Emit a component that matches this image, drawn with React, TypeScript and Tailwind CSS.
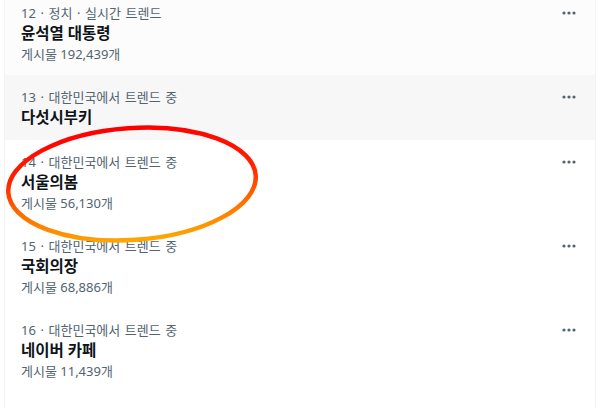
import React from "react";

type Trend = { cat: string; title: string; count?: string; bg: string };

const trends: Trend[] = [
  { cat: "12 · 정치 · 실시간 트렌드", title: "윤석열 대통령", count: "게시물 192,439개", bg: "bg-[#fcfcfc]" },
  { cat: "13 · 대한민국에서 트렌드 중", title: "다섯시부키", bg: "bg-[#f7f7f7]" },
  { cat: "14 · 대한민국에서 트렌드 중", title: "서울의봄", count: "게시물 56,130개", bg: "bg-white" },
  { cat: "15 · 대한민국에서 트렌드 중", title: "국회의장", count: "게시물 68,886개", bg: "bg-white" },
  { cat: "16 · 대한민국에서 트렌드 중", title: "네이버 카페", count: "게시물 11,439개", bg: "bg-white" },
];

function Dots() {
  return (
    <svg width="16" height="4" viewBox="0 0 16 4" className="shrink-0">
      <circle cx="3" cy="2" r="1.6" fill="#536471" />
      <circle cx="8" cy="2" r="1.6" fill="#536471" />
      <circle cx="13" cy="2" r="1.6" fill="#536471" />
    </svg>
  );
}

function Row({ t }: { t: Trend }) {
  return (
    <div className={`${t.bg} pt-[14px] pb-[13px] pl-[16px] pr-[18px]`}>
      <div className="flex items-center justify-between h-[16px]">
        <span className="text-[13px] leading-[16px] text-[#536471] [word-spacing:1.2px]">{t.cat}</span>
        <Dots />
      </div>
      <div className="mt-[2px] h-[20px] text-[15.5px] leading-[20px] font-bold text-[#0f1419]">{t.title}</div>
      {t.count && (
        <div className="mt-[3px] h-[16px] text-[13px] leading-[16px] text-[#536471]">{t.count}</div>
      )}
    </div>
  );
}

export default function App() {
  return (
    <div
      className="relative w-[600px] h-[408px] overflow-hidden bg-white"
      style={{ fontFamily: '"Noto Sans", "Noto Sans CJK KR", sans-serif' }}
    >
      <div className="ml-[4px] w-[592px] -mt-[9px] border-x border-[#eff3f4] min-h-[430px]">
        {trends.map((t) => (
          <Row key={t.cat} t={t} />
        ))}
      </div>
      <svg
        className="absolute left-0 top-0 pointer-events-none"
        width="600"
        height="408"
        viewBox="0 0 600 408"
      >
        <defs>
          <linearGradient id="g" x1="0" y1="128" x2="0" y2="240" gradientUnits="userSpaceOnUse">
            <stop offset="0" stopColor="#ff0000" />
            <stop offset="0.4" stopColor="#ff2200" />
            <stop offset="0.7" stopColor="#ff6a00" />
            <stop offset="1" stopColor="#ffa500" />
          </linearGradient>
        </defs>
        <ellipse
          cx="132"
          cy="184"
          rx="124"
          ry="56"
          transform="rotate(-4 132 184)"
          fill="none"
          stroke="url(#g)"
          strokeWidth="4.5"
        />
      </svg>
    </div>
  );
}
